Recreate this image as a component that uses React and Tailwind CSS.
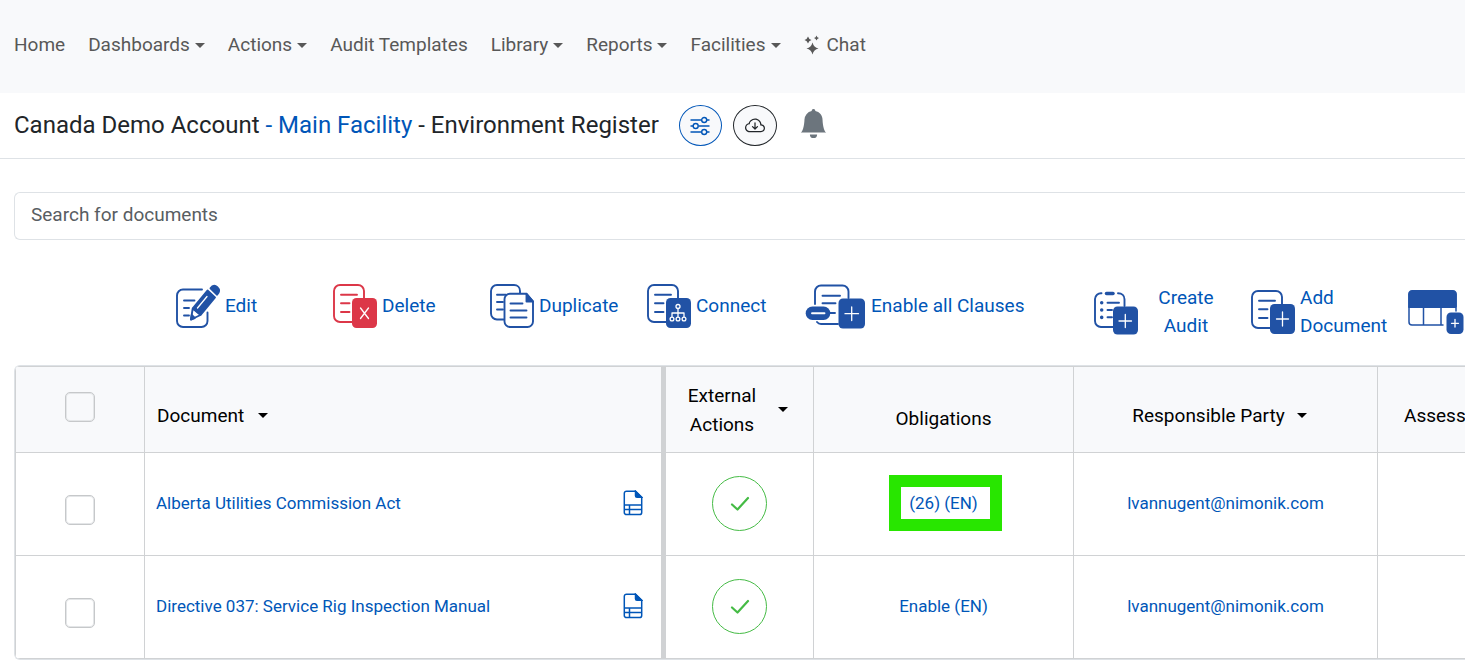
import clsx from "clsx";
import { BsBellFill, BsCloudArrowDown } from "react-icons/bs";

const NAV_ITEMS = [
	{ label: "Home" },
	{ label: "Dashboards", menu: true },
	{ label: "Actions", menu: true },
	{ label: "Audit Templates" },
	{ label: "Library", menu: true },
	{ label: "Reports", menu: true },
	{ label: "Facilities", menu: true },
];

const DOCUMENTS = [
	{
		name: "Alberta Utilities Commission Act",
		obligations: "(26) (EN)",
		highlighted: true,
		party: "lvannugent@nimonik.com",
	},
	{
		name: "Directive 037: Service Rig Inspection Manual",
		obligations: "Enable (EN)",
		party: "lvannugent@nimonik.com",
	},
];

const Caret = () => (
	<svg viewBox="0 0 10 5" className="w-2.5 h-[5px] shrink-0" fill="currentColor">
		<path d="M0 0h10L5 5z" />
	</svg>
);

const SparklesIcon = () => (
	<svg viewBox="0 0 16 20" className="w-4 h-5" fill="currentColor">
		<path d="M8.5 7.5q1.200 4.800 6 6q-4.800 1.200-6 6q-1.200-4.800-6-6q4.800-1.200 6-6z" />
		<path d="M4 1.500q.8 2.700 3.500 3.500q-2.700.8-3.500 3.500q-.8-2.700-3.500-3.500q2.700-.8 3.500-3.500z" />
		<path d="M12.500.5q.5 2 2.500 2.500q-2 .5-2.500 2.500q-.5-2-2.500-2.500q2-.5 2.500-2.500z" />
	</svg>
);

const SlidersIcon = () => (
	<svg viewBox="0 0 20 20" className="w-5 h-5" fill="none" stroke="currentColor" strokeWidth="1.4">
		<path d="M0.500 4h11M17 4h2.500M0.500 10h2.500M8.500 10h11M0.500 16h11M17 16h2.500" />
		<circle cx="14.200" cy="4" r="2.500" />
		<circle cx="5.700" cy="10" r="2.500" />
		<circle cx="14.200" cy="16" r="2.500" />
	</svg>
);

const SheetIcon = () => (
	<svg viewBox="0 0 20 26" className="w-5 h-[26px]" fill="none" stroke="currentColor" strokeWidth="1.500">
		<path d="M12.500 1.200H3.500a2.200 2.200 0 0 0-2.200 2.200v19a2.200 2.200 0 0 0 2.200 2.200h13a2.200 2.200 0 0 0 2.200-2.200V7.200z" />
		<path d="M12.500 1.200v4.500a1.500 1.500 0 0 0 1.500 1.500h4.700z" fill="currentColor" />
		<path d="M1.300 15h17.400M1.300 19.500h17.400M6.500 15v9.500" />
	</svg>
);

const CheckIcon = () => (
	<svg
		viewBox="0 0 20 16"
		className="w-5 h-4"
		fill="none"
		stroke="currentColor"
		strokeWidth="2.200"
		strokeLinecap="round"
		strokeLinejoin="round"
	>
		<path d="M2 9.500l5.500 5L18 3" />
	</svg>
);

// Sheet with three text lines, shared by most of the toolbar icons
const Sheet = () => (
	<>
		<rect x="1" y="1" width="30" height="37" rx="6" />
		<path d="M8 10.700h16M8 19.300h8.500M8 28h8.500" />
	</>
);

const Badge = ({ x = 19, y = 14, width = 25, height = 30, children }) => (
	<>
		<rect x={x} y={y} width={width} height={height} rx="4.500" fill="currentColor" stroke="none" />
		<g stroke="#fff" strokeWidth="1.300">
			{children}
		</g>
	</>
);

const ToolIcon = ({ width = 44, className = "w-11 text-[#2152a5]", children }) => (
	<svg
		viewBox={`0 0 ${width} 44`}
		className={clsx("h-11 shrink-0 overflow-visible", className)}
		fill="none"
		stroke="currentColor"
		strokeWidth="1.900"
		strokeLinecap="round"
		strokeLinejoin="round"
	>
		{children}
	</svg>
);

const EditIcon = () => (
	<ToolIcon>
		<path d="M26 5.500H7a6 6 0 0 0-6 6V37a6 6 0 0 0 6 6h18.500a6 6 0 0 0 6-6v-8.500" />
		<path d="M8 16.500h10.500M8 24h5M8 31.500h5" />
		<path d="M16.700 24.500L15 35.500l9.500-4.500z" fill="#fff" />
		<path d="M15 35.500l.7-4.500 3 3z" fill="currentColor" />
		<path d="M17 24L31.500 6.500l7.500 7-14 17z" fill="currentColor" />
		<path d="M34.500 4.200c2.500-3.800 5-2.800 6.800-1.100 2 1.900 2.800 4.200-.2 7.600z" fill="currentColor" />
		<path d="M21.500 24L31 12.500" stroke="#fff" strokeWidth="1.300" />
	</ToolIcon>
);

const DeleteIcon = () => (
	<ToolIcon className="w-11 text-[#dc3748]">
		<Sheet />
		<Badge>
			<path d="M27.500 24l8 10.500M35.500 24l-8 10.500" />
		</Badge>
	</ToolIcon>
);

const DuplicateIcon = () => (
	<ToolIcon>
		<path d="M13.500 35.500H7a6 6 0 0 1-6-6V7a6 6 0 0 1 6-6h17c3.500 0 6 2.500 6 6v2" />
		<path d="M7 10.700h9M7 18h6M7 25.500h6" />
		<path
			d="M36 9.700H20a5.500 5.500 0 0 0-5.500 5.500V37.500A5.500 5.500 0 0 0 20 43h17.500a5.500 5.500 0 0 0 5.500-5.500V17.500z"
			fill="#fff"
		/>
		<path d="M36.500 9.700V17.500h6.500z" fill="currentColor" />
		<path d="M20.500 19.500h12M20.500 26.500h16M20.500 33.500h16" />
	</ToolIcon>
);

const ConnectIcon = () => (
	<ToolIcon>
		<Sheet />
		<Badge>
			<circle cx="31" cy="22.500" r="2" />
			<path d="M31 24.500v8M25 32.500v-3.500h12v3.500" />
			<circle cx="25" cy="35" r="1.900" />
			<circle cx="31" cy="35" r="1.900" />
			<circle cx="37" cy="35" r="1.900" />
		</Badge>
	</ToolIcon>
);

const ClausesIcon = () => (
	<ToolIcon width={62} className="w-[62px] text-[#2152a5]">
		<path d="M11 20V7.500a6 6 0 0 1 6-6h21.500a6 6 0 0 1 6 6V14M13 38q1.500 2 4 2h17" />
		<path d="M18.500 11.700H36M18.500 19.300h13M26 29h5" />
		<rect x="1.700" y="22.500" width="24.600" height="13.500" rx="6.700" fill="currentColor" stroke="none" />
		<path d="M8 29.200h12.500" stroke="#fff" />
		<Badge x={34.5} y={14.5} width={26.5}>
			<path d="M41 29.700h13.500M47.700 23v13.500" />
		</Badge>
	</ToolIcon>
);

const AuditIcon = () => (
	<ToolIcon>
		<path d="M7.500 3.200A6 6 0 0 0 1 9v22a6 6 0 0 0 6 6h12M24 3.200c4 0 6.500 2.500 6.500 6V16" />
		<path d="M12.500 3.500h6.500" strokeWidth="3.500" />
		<path d="M7.700 12.700v.1M7.700 20v.1M7.700 27.300v.1" strokeWidth="3.500" />
		<path d="M13.500 12.700h11.500M13.500 20h4.500M13.500 27.300h4.500" />
		<Badge y={16.5} height={28}>
			<path d="M25 31h12.500M31.300 24.500v13" />
		</Badge>
	</ToolIcon>
);

const AddDocumentIcon = () => (
	<ToolIcon>
		<Sheet />
		<Badge>
			<path d="M25.500 29h12M31.500 22v14" />
		</Badge>
	</ToolIcon>
);

const AddColumnIcon = () => (
	<ToolIcon width={56} className="w-14 text-[#2152a5]">
		<path d="M48 17V4a3 3 0 0 0-3-3H4a3 3 0 0 0-3 3v13z" fill="currentColor" />
		<path d="M1 17v15a3 3 0 0 0 3 3h31M15.500 18v17M33 18v17M48 18v3" strokeWidth="1.500" />
		<Badge x={38.5} y={22.500} width={17} height={21.500}>
			<path d="M43.500 33.300h7M47 29.500v7.500" />
		</Badge>
	</ToolIcon>
);

const TOOLS = [
	{ label: "Edit", icon: EditIcon },
	{ label: "Delete", icon: DeleteIcon },
	{ label: "Duplicate", icon: DuplicateIcon },
	{ label: "Connect", icon: ConnectIcon },
	{ label: "Enable all Clauses", icon: ClausesIcon, className: "w-[290px]" },
	{ label: "Create Audit", icon: AuditIcon, textClassName: "w-[86px] px-3 text-center" },
	{ label: "Add Document", icon: AddDocumentIcon, textClassName: "w-[98px] text-left" },
];

const Checkbox = ({ label, className }) => (
	<input
		type="checkbox"
		aria-label={label}
		className={clsx(
			"block mx-auto w-[30px] h-[30px] appearance-none rounded-[5px] border border-[#c6c8ca]",
			"inset-ring inset-ring-[#e4e6e8] checked:bg-[#0056b8]",
			className
		)}
	/>
);

const Navbar = () => (
	<nav className="flex items-start gap-[23px] h-[93px] px-3.5 pt-[31px] bg-[#f8f9fb] text-[#585858] whitespace-nowrap">
		{NAV_ITEMS.map((item) => (
			<a key={item.label} href="#" className="flex items-center gap-[5px]">
				{item.label}
				{item.menu && <Caret />}
			</a>
		))}
		<a href="#" className="flex items-center gap-[7px]">
			<SparklesIcon />
			Chat
		</a>
	</nav>
);

const PageHeader = () => (
	<header className="flex items-center h-[66px] px-3.5 border-b border-[#dee2e6] whitespace-nowrap">
		<h1 className="pb-0.5 text-2xl text-[#212529]">
			Canada Demo Account{" "}
			<a href="#" className="text-[#0056b8]">
				- Main Facility
			</a>{" "}
			- Environment Register
		</h1>
		<button
			aria-label="Filters"
			className="flex items-center justify-center w-[43px] h-[41px] ml-5 rounded-[50%] border border-[#0056b8] bg-[#f8f9fb] text-[#0056b8]"
		>
			<SlidersIcon />
		</button>
		<button
			aria-label="Download"
			className="flex items-center justify-center w-11 h-[41px] ml-[11px] rounded-[50%] border border-[#212529] bg-[#f8f9fb] text-[#212529]"
		>
			<BsCloudArrowDown className="w-5 h-5" />
		</button>
		<button aria-label="Notifications" className="ml-[22px] pb-1 text-[#6c757d]">
			<BsBellFill className="w-[29px] h-[29px]" />
		</button>
	</header>
);

const Toolbar = () => (
	<div className="flex items-start mt-11 pl-[162px] overflow-hidden leading-7 text-[#0056b8]">
		{TOOLS.map(({ label, icon: Icon, className, textClassName }) => (
			<div key={label} className={clsx("shrink-0", className ?? "w-[157px]")}>
				<button className="flex items-center gap-[5px]">
					<Icon />
					<span className={textClassName ?? "whitespace-nowrap"}>{label}</span>
				</button>
			</div>
		))}
		<button aria-label="Add Column" className="shrink-0 pt-1.5">
			<AddColumnIcon />
		</button>
	</div>
);

const CELL = "border-t border-l border-[#d0d2d4] p-0";
const FROZEN_EDGE = "border-t border-l-[5px] border-[#d0d2d4] p-0";

const DocumentTable = () => (
	<div className="mt-[25px] overflow-hidden border border-r-0 border-[#dee2e6] rounded-l-md">
		<table className="table-fixed w-[1600px] border-separate border-spacing-0 border-b border-[#d0d2d4]">
			<colgroup>
				<col className="w-[129px]" />
				<col className="w-[517px]" />
				<col className="w-[152px]" />
				<col className="w-[260px]" />
				<col className="w-[304px]" />
				<col />
			</colgroup>
			<thead className="bg-[#f8f9fb] text-black leading-[29px] [&_th]:font-normal">
				<tr className="h-[86px]">
					<th className={CELL}>
						<Checkbox label="Select all" className="mb-1.5" />
					</th>
					<th className={CELL}>
						<button className="flex items-center gap-3.5 pl-3 pt-3">
							Document
							<Caret />
						</button>
					</th>
					<th className={FROZEN_EDGE}>
						<button className="flex items-center gap-2.5 ml-2.5">
							<span className="w-[92px] px-2">External Actions</span>
							<Caret />
						</button>
					</th>
					<th className={CELL}>
						<div className="pt-[18px]">Obligations</div>
					</th>
					<th className={CELL}>
						<button className="flex items-center gap-3 mx-auto pt-3 pr-3">
							Responsible Party
							<Caret />
						</button>
					</th>
					<th className={CELL}>
						<div className="pt-3 pl-[26px] text-left">Assess</div>
					</th>
				</tr>
			</thead>
			<tbody className="text-[17px] leading-6 text-[#0056b8]">
				{DOCUMENTS.map((doc) => (
					<tr key={doc.name} className="h-[103px]">
						<td className={CELL}>
							<Checkbox label={`Select ${doc.name}`} className="mt-3" />
						</td>
						<td className={CELL}>
							<div className="flex items-center justify-between pb-0.5 pl-[11px] pr-[18px]">
								<a href="#">{doc.name}</a>
								<button aria-label="Open sheet">
									<SheetIcon />
								</button>
							</div>
						</td>
						<td className={FROZEN_EDGE}>
							<div className="pb-0.5">
								<button
									aria-label="Compliant"
									className="flex items-center justify-center w-[55px] h-[55px] mx-auto rounded-full border border-[#45bb45] text-[#45bb45]"
								>
									<CheckIcon />
								</button>
							</div>
						</td>
						<td className={clsx(CELL, "text-center")}>
							<div className="pb-0.5">
								<span className="relative inline-block">
									<a href="#">{doc.obligations}</a>
									{doc.highlighted && (
										<span className="absolute -left-5 -right-6 -inset-y-4 border-12 border-[#28e600] pointer-events-none" />
									)}
								</span>
							</div>
						</td>
						<td className={clsx(CELL, "text-center")}>
							<div className="pb-0.5">
								<a href="#">{doc.party}</a>
							</div>
						</td>
						<td className={CELL} />
					</tr>
				))}
			</tbody>
		</table>
	</div>
);

const App = () => {
	return (
		<div className="overflow-hidden bg-white font-['Roboto',sans-serif] text-[19px] leading-7">
			<Navbar />
			<PageHeader />
			<main className="pl-3.5 pt-[33px]">
				<input
					type="text"
					aria-label="Search for documents"
					placeholder="Search for documents"
					className="block w-full h-12 px-4 pb-1 rounded-l-md border border-r-0 border-[#dee2e6] placeholder:text-[#585d62] outline-none"
				/>
				<Toolbar />
				<DocumentTable />
			</main>
		</div>
	);
};

export default App;
